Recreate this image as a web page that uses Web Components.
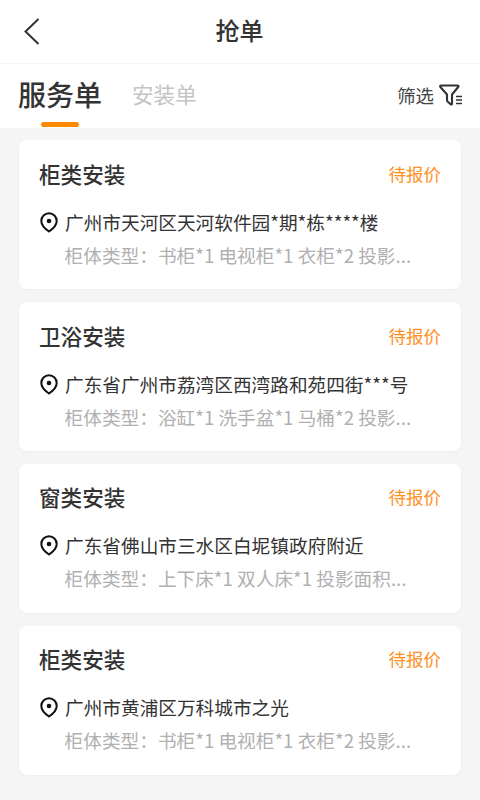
<!DOCTYPE html>
<html lang="zh-CN"><head><meta charset="utf-8"><style>
html,body{margin:0;padding:0;background:#f5f5f5;}
body{width:480px;height:800px;overflow:hidden;font-family:"Noto Sans CJK SC","Noto Sans",sans-serif;}
</style></head><body>
<app-page>
<nav-bar slot="top" title="抢单"></nav-bar>
<tab-bar slot="top"></tab-bar>
<order-card kind="柜类安装" status="待报价" addr="广州市天河区天河软件园*期*栋****楼" detail="柜体类型：书柜*1 电视柜*1 衣柜*2 投影..."></order-card>
<order-card kind="卫浴安装" status="待报价" addr="广东省广州市荔湾区西湾路和苑四街***号" detail="柜体类型：浴缸*1 洗手盆*1 马桶*2 投影..."></order-card>
<order-card style="--pt:19px" kind="窗类安装" status="待报价" addr="广东省佛山市三水区白坭镇政府附近" detail="柜体类型：上下床*1 双人床*1 投影面积..."></order-card>
<order-card style="--pt:19px" kind="柜类安装" status="待报价" addr="广州市黄浦区万科城市之光" detail="柜体类型：书柜*1 电视柜*1 衣柜*2 投影..."></order-card>
</app-page>
<script>
function def(name,html,init){customElements.define(name,class extends HTMLElement{connectedCallback(){if(this.shadowRoot)return;const r=this.attachShadow({mode:"open"});r.innerHTML=html;if(init)init(r,this);}});}
def("app-page",`<style>:host{display:block;width:480px;height:800px;background:#f5f5f5}
.list{display:flex;flex-direction:column;gap:13px;padding:12px 19px 0}</style>
<slot name="top"></slot><div class="list"><slot></slot></div>`);
def("nav-bar",`<style>:host{display:flex;align-items:center;justify-content:center;position:relative;height:63px;background:#fff;border-bottom:1px solid #f4f4f4;color:#333;font-size:24px;font-weight:500}
svg{position:absolute;left:22px;top:16px}
span{margin-top:-4px;margin-left:-1px}</style>
<svg width="22" height="32" viewBox="0 0 22 32" fill="none" stroke="#333" stroke-width="2"><path d="M16.5 3 3.5 15.5 16.5 28"/></svg><span id="t"></span>`,(r,h)=>{r.getElementById("t").textContent=h.getAttribute("title")});
def("tab-bar",`<style>:host{display:flex;align-items:center;position:relative;height:64px;background:#fff;padding:0 18px;box-sizing:border-box}
.a{font-size:28px;font-weight:500;color:#333;line-height:64px;margin-top:-4px}
.b{font-size:21.6px;color:#c4c4c4;margin-left:30px;margin-top:-6px}
.f{margin-left:auto;display:flex;align-items:center;gap:5px;font-size:18.4px;color:#444;margin-right:-1px;margin-top:-2px}
.f span{margin-top:-1px}
.u{position:absolute;left:41px;top:58px;width:38px;height:5px;border-radius:3px;background:#ff8a00}</style>
<span class="a">服务单</span><span class="b">安装单</span>
<span class="f"><span>筛选</span><svg width="24" height="24" viewBox="0 0 24 24" fill="none" stroke="#333" stroke-width="2.1" stroke-linejoin="round"><path d="M2 2.5H18.5C19.5 2.5 19.8 3.3 19.2 4L13 11.5V20.5C13 21.5 12.2 21.8 11.6 21.2L8.6 18.5C8.2 18.1 8 17.7 8 17V11.5L1.4 4C.9 3.3 1.2 2.5 2 2.5Z"/><path d="M17 13.5H23M17 17H23M17 20.5H23" stroke-width="1.6"/></svg></span>
<i class="u"></i>`);
def("order-card",`<style>:host{display:block;height:149px;box-sizing:border-box;background:#fff;border-radius:8px;padding:var(--pt,20px) 20px 0 21px;box-shadow:0 1px 3px rgba(0,0,0,.03)}
.h{display:flex;justify-content:space-between;align-items:center;height:30px}
.k{font-size:21.6px;font-weight:500;color:#333;margin:-4px 0 0 -1px}
.s{font-size:17.5px;color:#ff8f1f;margin-top:-4px}
.a{display:flex;align-items:center;gap:7px;margin-top:19px;height:28px;font-size:18.67px;color:#333;white-space:nowrap;letter-spacing:0}
.a svg{flex:none;margin-top:-2px}
.t{margin-top:-4px}
.d{margin:4px 0 0 24.6px;font-size:18.67px;line-height:28px;color:#b0b0b0;white-space:nowrap}</style>
<div class="h"><span class="k"></span><span class="s"></span></div>
<div class="a"><svg width="18" height="21" viewBox="0 0 18 21" fill="none" stroke="#111" stroke-width="2"><path d="M9 19.5C6.5 17.8 1.3 14 1.3 9A7.7 7.7 0 0 1 16.7 9C16.7 14 11.5 17.8 9 19.5Z"/><circle cx="9" cy="9" r="2.3" fill="#111" stroke="none"/></svg><span class="t"></span></div>
<div class="d"></div>`,(r,h)=>{r.querySelector(".k").textContent=h.getAttribute("kind");r.querySelector(".s").textContent=h.getAttribute("status");r.querySelector(".t").textContent=h.getAttribute("addr");r.querySelector(".d").textContent=h.getAttribute("detail");});
</script></body></html>
